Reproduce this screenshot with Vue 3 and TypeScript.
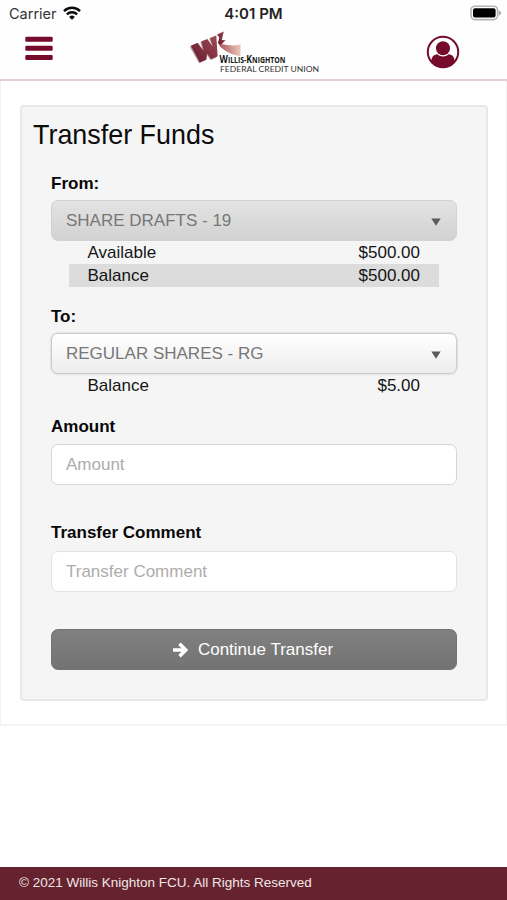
<script setup lang="ts">
interface Detail {
  label: string
  value: string
  shaded?: boolean
}

interface AccountField {
  id: string
  label: string
  account: string
  details: Detail[]
}

const accounts: AccountField[] = [
  {
    id: 'from',
    label: 'From:',
    account: 'SHARE DRAFTS - 19',
    details: [
      { label: 'Available', value: '$500.00' },
      { label: 'Balance', value: '$500.00', shaded: true },
    ],
  },
  {
    id: 'to',
    label: 'To:',
    account: 'REGULAR SHARES - RG',
    details: [{ label: 'Balance', value: '$5.00' }],
  },
]
</script>

<template>
  <div class="screen">
    <div class="status">
      <div class="carrier">
        <span>Carrier</span>
        <svg class="wifi" viewBox="0 0 18 14" width="18" height="14">
          <g fill="none" stroke="#0a0a0a" stroke-width="2.5">
            <path d="M1 5.1a11.4 11.4 0 0 1 16 0" />
            <path d="M3.9 8.3a7.2 7.2 0 0 1 10.2 0" />
          </g>
          <path d="M9 13.8 6.1 10.9a4.1 4.1 0 0 1 5.8 0z" fill="#0a0a0a" />
        </svg>
      </div>
      <span class="time">4:01 PM</span>
      <svg class="battery" viewBox="0 0 32 16" width="32" height="16">
        <rect x="1" y="1.2" width="26.6" height="13.4" rx="4" fill="#fff" stroke="#b4b4b4" stroke-width="1.6" />
        <rect x="3" y="3.2" width="22.6" height="9.4" rx="2" fill="#000" />
        <path d="M28.8 5.4c3 1.2 3 3.8 0 5z" fill="#a8a8a8" />
      </svg>
    </div>

    <header class="header">
      <button class="icon-button" aria-label="Menu">
        <svg viewBox="0 0 28 24" width="28" height="24" fill="#760b2c">
          <rect x="0.3" y="0.7" width="27.4" height="5" rx="1.2" />
          <rect x="0.3" y="9.8" width="27.4" height="5" rx="1.2" />
          <rect x="0.3" y="18.9" width="27.4" height="5" rx="1.2" />
        </svg>
      </button>
      <svg class="logo" viewBox="0 0 132 46" width="132" height="46">
        <defs>
          <linearGradient id="ribbon" x1="0" y1="0" x2="1" y2="0">
            <stop offset="0" stop-color="#a65358" />
            <stop offset="1" stop-color="#ecc5bb" />
          </linearGradient>
          <linearGradient id="wing" x1="0" y1="1" x2="1" y2="0">
            <stop offset="0" stop-color="#641b2c" />
            <stop offset="1" stop-color="#a04a56" />
          </linearGradient>
        </defs>
        <path d="M29.500 15.500C37 17 44 18.500 51.500 16.500V28C46 27.500 38 25 31 18.500z" fill="url(#ribbon)" />
        <path d="M0.700 18.700 7.700 15.500 14 24 11.300 14.200 17.500 11.500 24 19.500 20 10.800 26.500 8.200 27.500 29.500 21.500 32 17 26 16.500 32.500 10 35.200z" fill="#b9a5a9" />
        <path d="M1.800 17.800 8.600 14.800 14.800 23 12.300 13.400 18.300 10.900 24 18.700 21 10 27.300 7.500 28.600 28.300 22.200 31.200 18 25.500 17.500 31.600 10.800 34.600z" fill="url(#wing)" />
        <path d="M28 6.500 34.800 3.500 32.800 12 36.500 12.300 32.200 16.700 28.800 15.200 30.300 9.500z" fill="url(#wing)" />
        <text x="30.500" y="35.400" class="logo-name" textLength="66" lengthAdjust="spacingAndGlyphs"><tspan class="cap">W</tspan>ILLIS-<tspan class="cap">K</tspan>NIGHTON</text>
        <text x="31" y="43.500" class="logo-sub" textLength="99" lengthAdjust="spacingAndGlyphs">FEDERAL CREDIT UNION</text>
      </svg>
      <button class="icon-button" aria-label="Profile">
        <svg viewBox="0 0 34 34" width="34" height="34">
          <circle cx="17" cy="17" r="15.200" fill="#fff" stroke="#760b2c" stroke-width="2" />
          <circle cx="17" cy="13.300" r="7" fill="#760b2c" />
          <path d="M5.200 26.300C5.800 21 8.400 19.500 11.400 19.300C14.700 22.200 19.300 22.200 22.600 19.300C25.600 19.500 28.200 21 28.800 26.300C22.500 34.500 11.500 34.500 5.200 26.300z" fill="#760b2c" />
        </svg>
      </button>
    </header>

    <main class="content">
      <section class="card">
        <h1>Transfer Funds</h1>
        <form class="form" @submit.prevent>
          <div v-for="field in accounts" :key="field.id" :class="['field', field.id]">
            <label>{{ field.label }}</label>
            <button type="button" class="control select">
              <span>{{ field.account }}</span>
              <svg viewBox="0 0 10 8" width="10" height="8"><path d="M0.300 0.500h9.400L5 7.800z" fill="#5b5b5b" /></svg>
            </button>
            <div class="details">
              <div v-for="d in field.details" :key="d.label" :class="['detail', { shaded: d.shaded }]">
                <span>{{ d.label }}</span>
                <span>{{ d.value }}</span>
              </div>
            </div>
          </div>
          <div class="field amount">
            <label for="amount">Amount</label>
            <input id="amount" class="control" type="text" placeholder="Amount" />
          </div>
          <div class="field comment">
            <label for="comment">Transfer Comment</label>
            <input id="comment" class="control" type="text" placeholder="Transfer Comment" />
          </div>
          <button class="control submit" type="submit">
            <svg viewBox="0 0 15 16" width="15" height="16">
              <path d="M0 8H12M6.500 1.800 12.700 8 6.500 14.200" fill="none" stroke="#fff" stroke-width="3.600" />
            </svg>
            <span>Continue Transfer</span>
          </button>
        </form>
      </section>
    </main>

    <footer class="footer">© 2021 Willis Knighton FCU. All Rights Reserved</footer>
  </div>
</template>

<style>
body {
  margin: 0;
  background: #fff;
}
</style>

<style scoped>
* {
  box-sizing: border-box;
}

.screen {
  display: flex;
  flex-direction: column;
  height: 900px;
  font-family: "Liberation Sans", Arial, sans-serif;
  font-size: 17px;
  color: #151515;
}

.status {
  display: grid;
  grid-template-columns: 1fr auto 1fr;
  align-items: center;
  height: 28px;
  padding: 0 5px 0 9px;
  font-family: Inter, sans-serif;
  font-size: 14.5px;
  line-height: 26px;
  background: #fefefe;
}

.carrier {
  display: flex;
  align-items: center;
  gap: 6px;
  color: #333;
}

.wifi {
  margin-top: -2px;
}

.time {
  margin-left: -4px;
  font-size: 15px;
  font-weight: 600;
  color: #222;
}

.battery {
  justify-self: end;
  margin-top: -2px;
}

.header {
  display: flex;
  align-items: flex-start;
  height: 53px;
  padding: 0 47px 0 25px;
  border-bottom: 2px solid #e3d0d6;
  background: #fefefe;
}

.icon-button {
  display: block;
  margin-top: 8px;
  padding: 0;
  border: 0;
  background: none;
}

.icon-button:last-child {
  margin: 7px 0 0 auto;
}

.icon-button svg,
.logo {
  display: block;
}

.logo {
  margin-left: 136px;
}

.logo-name {
  font-family: "Open Sans", sans-serif;
  font-size: 8px;
  font-weight: 700;
  fill: #151515;
}

.cap {
  font-size: 10px;
}

.logo-sub {
  font-family: Lato, sans-serif;
  font-size: 8.2px;
  fill: #333;
}

.content {
  height: 645px;
  padding: 24px 19px 0;
  border: 1px solid #f3f3f3;
  border-width: 0 1px 2px;
}

.card {
  width: 468px;
  height: 596px;
  padding: 11px 29px 0;
  border: 2px solid #e8e8e8;
  border-radius: 4px;
  background: #f5f5f5;
}

h1 {
  margin: 0 0 0 -18px;
  font-size: 26.9px;
  line-height: 34px;
  font-weight: 400;
  color: #0c0c0c;
}

.field {
  display: flex;
  flex-direction: column;
}

label {
  font-weight: 700;
  line-height: 20px;
  margin-bottom: 6px;
  color: #080808;
}

.from {
  margin-top: 22px;
}

.to {
  margin-top: 20px;
}

.amount {
  margin-top: 20px;
}

.amount label {
  margin-bottom: 7px;
}

.comment {
  margin-top: 38px;
}

.comment label {
  margin-bottom: 8px;
}

.control {
  display: flex;
  align-items: center;
  width: 406px;
  height: 41px;
  padding: 0 14px;
  border: 1px solid #d6d6d6;
  border-radius: 7px;
  font: inherit;
  background: #fff;
}

.comment .control {
  border-color: #e2e2e2;
}

.control::placeholder {
  color: #adadad;
  opacity: 1;
}

.select {
  justify-content: space-between;
  padding-right: 15px;
  color: #777;
  background: linear-gradient(#fff, #ededed);
  border-color: #ccc;
  box-shadow: 0 0 2px #bbb;
}

.select svg {
  margin-top: 3px;
}

.from .select {
  background: linear-gradient(#e3e3e3, #d2d2d2);
  border-color: #d2d2d2;
  box-shadow: none;
}

.details {
  padding: 0 18px;
}

.detail {
  display: flex;
  justify-content: space-between;
  width: 370px;
  height: 23px;
  padding: 0 19px 0 18.5px;
  line-height: 23px;
}

.shaded {
  background: #dcdcdc;
}

.submit {
  justify-content: center;
  gap: 10px;
  margin-top: 37px;
  padding: 1px 16px 0 14px;
  border-color: #757575;
  background: linear-gradient(#808080, #737373);
  color: #fff;
}

.footer {
  height: 33px;
  margin-top: auto;
  padding-left: 19px;
  font-size: 13.5px;
  line-height: 31px;
  color: #f1e6e8;
  background: #66232f;
}
</style>
